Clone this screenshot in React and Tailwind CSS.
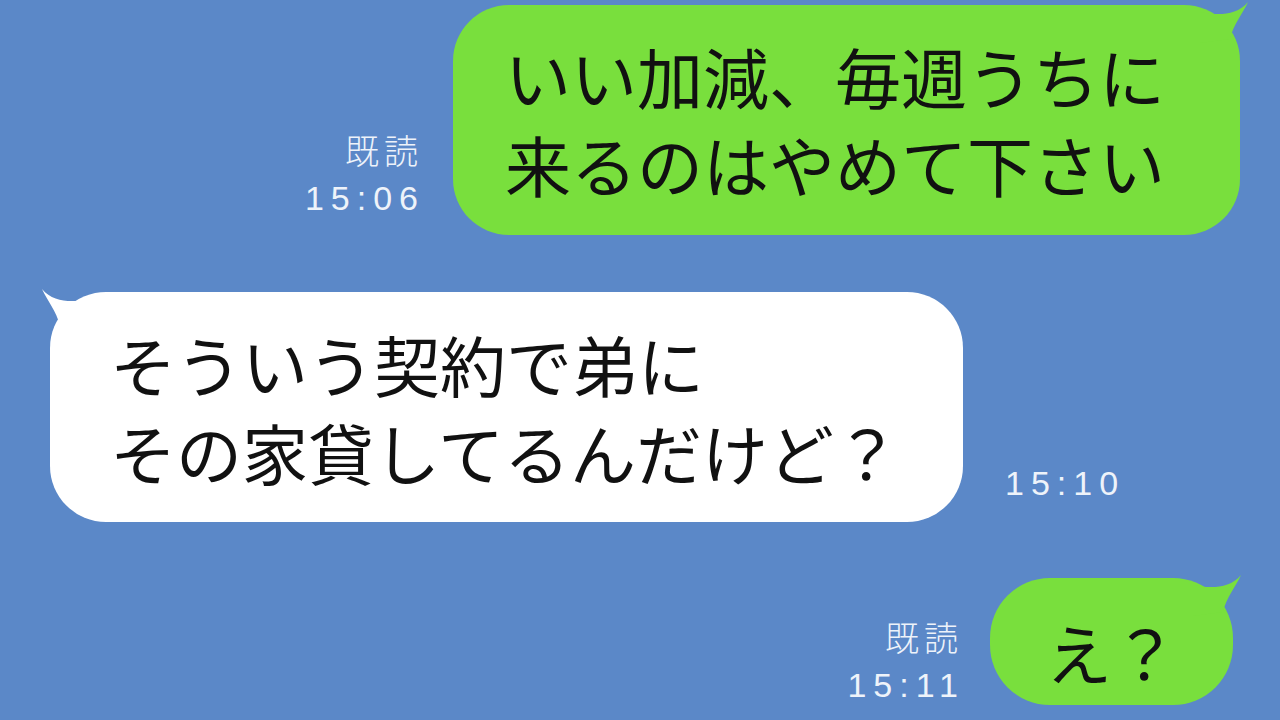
import React from 'react';

const jp = { fontFamily: '"Noto Sans CJK JP", "Noto Sans", sans-serif' };
const num = { fontFamily: '"Liberation Sans", Arial, sans-serif' };

// speech-bubble tails; fill overlaps the rounded corner of the bubble
const TailRight = ({ color }) => (
    <svg className="absolute right-[-12px] top-[-6px]" width="60" height="50" viewBox="0 0 60 50">
        <path d="M8 13 C22 16 44 18 56 3 C50 16 42 24 38 40 L8 44 Z" fill={color} />
    </svg>
);

const TailLeft = ({ color }) => (
    <svg className="absolute left-[-12px] top-[-6px]" width="60" height="50" viewBox="0 0 60 50">
        <path d="M52 13 C38 16 16 18 4 3 C10 16 18 24 22 40 L52 44 Z" fill={color} />
    </svg>
);

const ReadMark = ({ time, read = true }) => (
    <div className="flex flex-col items-end text-[#eef3fa] font-light">
        {read && (
            <span className="text-[34px] leading-[48px] tracking-[5px] mr-[-5px]" style={jp}>既読</span>
        )}
        <span className="text-[34px] leading-[48px] tracking-[7px] mr-[-7px]" style={num}>{time}</span>
    </div>
);

const BubbleText = ({ lines }) => (
    <div className="text-[66px] leading-[88px] text-[#111] font-normal whitespace-nowrap" style={jp}>
        {lines.map((l) => <div key={l}>{l}</div>)}
    </div>
);

export default function App() {
    return (
        <div className="w-full h-[720px] bg-[#5b88c8] overflow-hidden flex flex-col">
            <div className="flex justify-end items-end pt-[5px] pr-[40px]">
                <div className="mr-[35px] mb-[13px]">
                    <ReadMark time="15:06" />
                </div>
                <div className="relative w-[787px] h-[230px] rounded-[56px] bg-[#79df3d] pl-[52px] pt-[26px]">
                    <TailRight color="#79df3d" />
                    <div className="relative">
                        <BubbleText lines={['いい加減、毎週うちに', '来るのはやめて下さい']} />
                    </div>
                </div>
            </div>

            <div className="flex items-end mt-[57px] pl-[50px]">
                <div className="relative w-[913px] h-[230px] rounded-[56px] bg-white pl-[60px] pt-[27px]">
                    <TailLeft color="#ffffff" />
                    <div className="relative">
                        <BubbleText lines={['そういう契約で弟に', 'その家貸してるんだけど？']} />
                    </div>
                </div>
                <div className="ml-[42px] mb-[15px]">
                    <ReadMark time="15:10" read={false} />
                </div>
            </div>

            <div className="flex justify-end items-end mt-[56px] pr-[47px]">
                <div className="mr-[32px] mb-[-4px]">
                    <ReadMark time="15:11" />
                </div>
                <div className="relative w-[243px] h-[127px] rounded-[60px] bg-[#79df3d] pl-[56px] pt-[29px]">
                    <TailRight color="#79df3d" />
                    <div className="relative">
                        <BubbleText lines={['え？']} />
                    </div>
                </div>
            </div>
        </div>
    );
}
